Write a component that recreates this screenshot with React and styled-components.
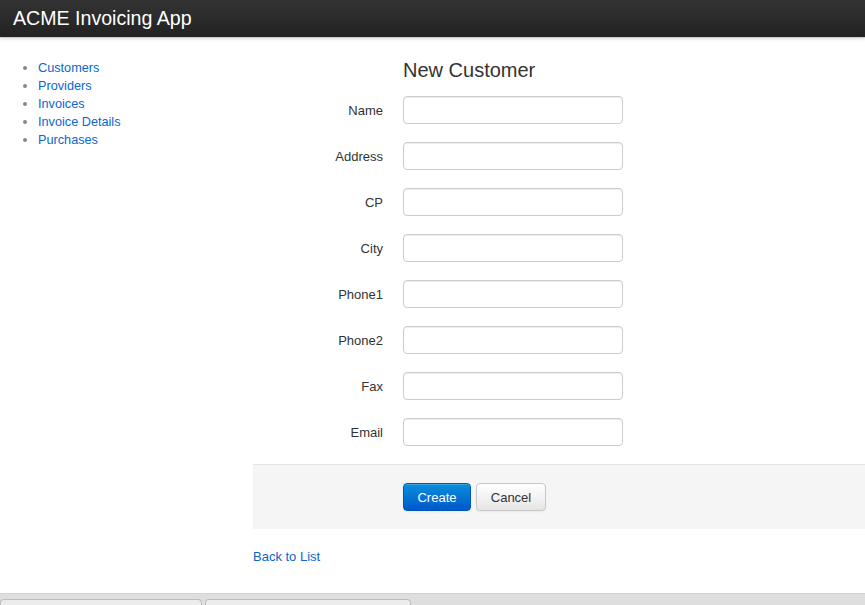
import React from 'react'
import styled, { createGlobalStyle } from 'styled-components'

const GlobalStyle = createGlobalStyle`
  html, body {
    margin: 0;
    padding: 0;
    background: #fff;
  }
  body {
    font-family: "Liberation Sans", Arial, sans-serif;
    font-size: 13px;
    color: #333;
  }
`

const Page = styled.div`
  height: 605px;
  display: flex;
  flex-direction: column;
  overflow: hidden;
`

const NavBar = styled.div`
  height: 37px;
  background: linear-gradient(#333333, #222222);
  border-bottom: 1px solid #cfcfcf;
  box-shadow: 0 1px 3px rgba(0, 0, 0, 0.15);
  display: flex;
  align-items: center;
  padding-left: 13px;
`

const Brand = styled.span`
  color: #fff;
  font-size: 19.6px;
  line-height: 20px;
  margin-top: -2px;
`

const Body = styled.div`
  display: flex;
  padding-top: 21px;
`

const Sidebar = styled.ul`
  width: 215px;
  margin: 0;
  padding: 0 0 0 38px;
  list-style: disc;
  color: #888;
  line-height: 18px;
`

const NavLink = styled.a`
  color: #0a66d0;
  text-decoration: none;
  font-size: 12.7px;
`

const Main = styled.div`
  flex: 1;
`

const Title = styled.h2`
  margin: 0 0 15px 150px;
  font-size: 20px;
  font-weight: normal;
  line-height: 22px;
  color: #333;
`

const Row = styled.div`
  display: flex;
  align-items: center;
  gap: 20px;
  margin-top: 18px;

  &:first-of-type {
    margin-top: 0;
  }
`

const Label = styled.label`
  width: 130px;
  text-align: right;
  color: #333;
`

const Input = styled.input`
  box-sizing: border-box;
  width: 220px;
  height: 28px;
  border: 1px solid #cccccc;
  border-radius: 4px;
  box-shadow: inset 0 1px 1px rgba(0, 0, 0, 0.075);
  padding: 4px 6px;
  font-family: inherit;
`

const Actions = styled.div`
  margin-top: 18px;
  background: #f5f5f5;
  border-top: 1px solid #e5e5e5;
  height: 64px;
  display: flex;
  align-items: center;
  gap: 5px;
  padding-left: 150px;
`

const Button = styled.button`
  box-sizing: border-box;
  height: 28px;
  padding: 0 12px;
  font-family: inherit;
  font-size: 13px;
  border-radius: 4px;
  border: 1px solid ${p => (p.$primary ? '#0055b8' : '#c8c8c8')};
  color: ${p => (p.$primary ? '#fff' : '#333')};
  background: ${p =>
    p.$primary
      ? 'linear-gradient(#0a8fdc, #0058c9)'
      : 'linear-gradient(#ffffff, #e6e6e6)'};
  box-shadow: inset 0 1px 0 rgba(255, 255, 255, 0.2), 0 1px 2px rgba(0, 0, 0, 0.05);
  min-width: ${p => (p.$primary ? '68px' : '70px')};
`

const BackLink = styled.a`
  display: block;
  margin-top: 20px;
  color: #0a66d0;
  text-decoration: none;
`

const Taskbar = styled.div`
  margin-top: auto;
  height: 11px;
  background: #dedede;
  border-top: 1px solid #d2d2d2;
  display: flex;
  align-items: flex-end;
  gap: 3px;
`

const Tab = styled.div`
  width: ${p => p.$w}px;
  height: 5px;
  background: #ececec;
  border: 1px solid #bdbdbd;
  border-bottom: none;
  border-radius: 4px 4px 0 0;
`

const fields = ['Name', 'Address', 'CP', 'City', 'Phone1', 'Phone2', 'Fax', 'Email']
const links = ['Customers', 'Providers', 'Invoices', 'Invoice Details', 'Purchases']

export default function App() {
  return (
    <Page>
      <GlobalStyle />
      <NavBar>
        <Brand>ACME Invoicing App</Brand>
      </NavBar>
      <Body>
        <Sidebar>
          {links.map(l => (
            <li key={l}>
              <NavLink href="#">{l}</NavLink>
            </li>
          ))}
        </Sidebar>
        <Main>
          <Title>New Customer</Title>
          {fields.map(f => (
            <Row key={f}>
              <Label>{f}</Label>
              <Input type="text" />
            </Row>
          ))}
          <Actions>
            <Button $primary>Create</Button>
            <Button>Cancel</Button>
          </Actions>
          <BackLink href="#">Back to List</BackLink>
        </Main>
      </Body>
      <Taskbar>
        <Tab $w={200} />
        <Tab $w={204} />
      </Taskbar>
    </Page>
  )
}
